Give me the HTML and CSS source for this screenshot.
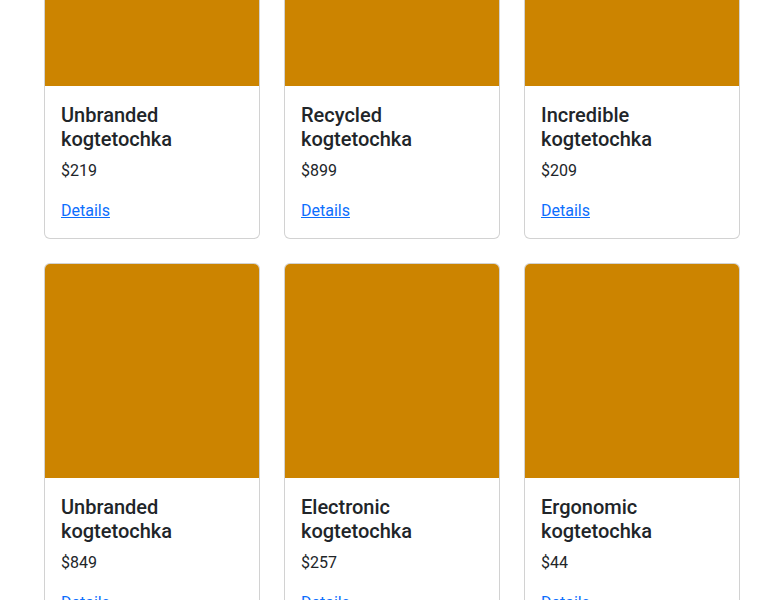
FILE: index.html
```html
<!DOCTYPE html>
<html>
<head>
<meta charset="utf-8">
<link rel="stylesheet" href="styles.css">
</head>
<body>
<div class="container">
  <div class="grid">
    <div class="card"><div class="card-img"></div><div class="card-body"><h5 class="card-title">Unbranded kogtetochka</h5><p class="card-text">$219</p><a href="#" class="card-link">Details</a></div></div>
    <div class="card"><div class="card-img"></div><div class="card-body"><h5 class="card-title">Recycled kogtetochka</h5><p class="card-text">$899</p><a href="#" class="card-link">Details</a></div></div>
    <div class="card"><div class="card-img"></div><div class="card-body"><h5 class="card-title">Incredible kogtetochka</h5><p class="card-text">$209</p><a href="#" class="card-link">Details</a></div></div>
    <div class="card"><div class="card-img"></div><div class="card-body"><h5 class="card-title">Unbranded kogtetochka</h5><p class="card-text">$849</p><a href="#" class="card-link">Details</a></div></div>
    <div class="card"><div class="card-img"></div><div class="card-body"><h5 class="card-title">Electronic kogtetochka</h5><p class="card-text">$257</p><a href="#" class="card-link">Details</a></div></div>
    <div class="card"><div class="card-img"></div><div class="card-body"><h5 class="card-title">Ergonomic kogtetochka</h5><p class="card-text">$44</p><a href="#" class="card-link">Details</a></div></div>
  </div>
</div>
</body>
</html>
```
FILE: styles.css
```css
* { box-sizing: border-box; }
html, body { margin: 0; padding: 0; background: #fff; }
body {
  font-family: Roboto, "Noto Sans", sans-serif;
  font-size: 16px;
  line-height: 1.5;
  color: #212529;
  overflow: hidden;
}
.container {
  margin-top: -129px;
  padding-left: 44px;
}
.grid {
  display: grid;
  grid-template-columns: repeat(3, 216px);
  column-gap: 24px;
  row-gap: 24px;
}
.card {
  border: 1px solid rgba(0,0,0,0.175);
  border-radius: 6px;
  overflow: hidden;
  background: #fff;
}
.card-img {
  height: 214px;
  background: #cc8400;
}
.card-body {
  padding: 17px 16px 15px;
}
.card-title {
  margin: 0 0 8px;
  font-size: 20px;
  font-weight: 500;
  line-height: 1.2;
}
.card-text {
  margin: 0 0 16px;
}
.card-link {
  color: #0d6efd;
  text-decoration: underline;
}
```
